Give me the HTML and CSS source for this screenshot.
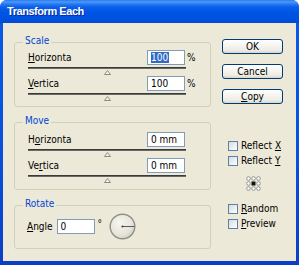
FILE: index.html
```html
<!DOCTYPE html>
<html>
<head>
<meta charset="utf-8">
<title>Transform Each</title>
<link rel="stylesheet" href="styles.css">
</head>
<body>
<div class="window">
  <div class="titlebar"><span class="title">Transform Each</span></div>
  <div class="client">
    <div class="left">
      <fieldset class="group scale">
        <legend>Scale</legend>
        <div class="gbody">
          <div class="srow">
            <div class="field"><span class="label"><u>H</u>orizonta</span><span class="input"><span class="hl">100</span></span><span class="unit">%</span></div>
            <div class="track"></div>
            <div class="thumb"><svg width="7" height="5" viewBox="0 0 7 5"><path d="M3.5 0.5 L6.5 4.5 L0.5 4.5 Z" fill="#f4f3ee" stroke="#8a8a80" stroke-width="1"/></svg></div>
          </div>
          <div class="srow">
            <div class="field"><span class="label"><u>V</u>ertica</span><span class="input">100</span><span class="unit">%</span></div>
            <div class="track"></div>
            <div class="thumb"><svg width="7" height="5" viewBox="0 0 7 5"><path d="M3.5 0.5 L6.5 4.5 L0.5 4.5 Z" fill="#f4f3ee" stroke="#8a8a80" stroke-width="1"/></svg></div>
          </div>
        </div>
      </fieldset>
      <fieldset class="group move">
        <legend>Move</legend>
        <div class="gbody">
          <div class="srow">
            <div class="field"><span class="label">H<u>o</u>rizonta</span><span class="input">0 mm</span><span class="unit"></span></div>
            <div class="track"></div>
            <div class="thumb"><svg width="7" height="5" viewBox="0 0 7 5"><path d="M3.5 0.5 L6.5 4.5 L0.5 4.5 Z" fill="#f4f3ee" stroke="#8a8a80" stroke-width="1"/></svg></div>
          </div>
          <div class="srow">
            <div class="field"><span class="label">Ve<u>r</u>tica</span><span class="input">0 mm</span><span class="unit"></span></div>
            <div class="track"></div>
            <div class="thumb"><svg width="7" height="5" viewBox="0 0 7 5"><path d="M3.5 0.5 L6.5 4.5 L0.5 4.5 Z" fill="#f4f3ee" stroke="#8a8a80" stroke-width="1"/></svg></div>
          </div>
        </div>
      </fieldset>
      <fieldset class="group rotate">
        <legend>Rotate</legend>
        <div class="gbody">
          <div class="arow">
            <span class="label"><u>A</u>ngle</span>
            <span class="input">0</span>
            <span class="deg">°</span>
            <svg class="dial" width="27" height="27" viewBox="0 0 27 27">
              <defs>
                <radialGradient id="dg" cx="0.4" cy="0.35" r="0.7">
                  <stop offset="0" stop-color="#f6f5ef"/>
                  <stop offset="0.7" stop-color="#e6e4da"/>
                  <stop offset="1" stop-color="#cfccc0"/>
                </radialGradient>
              </defs>
              <circle cx="13.5" cy="13.5" r="12.3" fill="url(#dg)" stroke="#8e8e8a" stroke-width="1.4"/>
              <line x1="13.5" y1="13.5" x2="25.5" y2="13.5" stroke="#5a5a5a" stroke-width="1"/>
              <circle cx="13.5" cy="13.5" r="1.1" fill="#444"/>
            </svg>
          </div>
        </div>
      </fieldset>
    </div>
    <div class="right">
      <div class="btn">OK</div>
      <div class="btn">Cancel</div>
      <div class="btn"><u>C</u>opy</div>
      <div class="checks first">
        <div class="chk"><span class="box"></span><span>Reflect <u>X</u></span></div>
        <div class="chk"><span class="box"></span><span>Reflect <u>Y</u></span></div>
      </div>
      <svg class="refpt" width="15" height="15" viewBox="0 0 15 15">
        <g fill="#fff" stroke="#8a8a8a" stroke-width="0.9">
          <circle cx="2.5" cy="2.5" r="1.8"/>
          <circle cx="7.5" cy="2.5" r="1.8"/>
          <circle cx="12.5" cy="2.5" r="1.8"/>
          <circle cx="2.5" cy="7.5" r="1.8"/>
          <circle cx="12.5" cy="7.5" r="1.8"/>
          <circle cx="2.5" cy="12.5" r="1.8"/>
          <circle cx="7.5" cy="12.5" r="1.8"/>
          <circle cx="12.5" cy="12.5" r="1.8"/>
        </g>
        <rect x="5.5" y="5.5" width="4" height="4" fill="#111"/>
      </svg>
      <div class="checks second">
        <div class="chk"><span class="box"></span><span><u>R</u>andom</span></div>
        <div class="chk"><span class="box"></span><span><u>P</u>review</span></div>
      </div>
    </div>
  </div>
</div>
</body>
</html>
```

FILE: styles.css
```css
* { box-sizing: border-box; }
html, body { margin: 0; padding: 0; background: #ffffff; }
body {
  width: 299px;
  height: 265px;
  overflow: hidden;
  font-family: "DejaVu Sans Condensed", "Liberation Sans", sans-serif;
  font-size: 10px;
  color: #000;
}
u { text-decoration: underline; text-underline-offset: 1px; }

.window {
  width: 299px;
  height: 265px;
  display: flex;
  flex-direction: column;
  background: linear-gradient(to bottom, #0a5ae6 0%, #0850dc 60%, #0a3fc6 100%);
  border-radius: 7px 7px 0 0;
  overflow: hidden;
}
.titlebar {
  height: 23px;
  flex: none;
  display: flex;
  align-items: center;
  padding-left: 7px;
  padding-bottom: 1px;
  background: linear-gradient(to bottom, #2a7af0 0px, #4d9af8 2px, #2a7af2 4px, #0a60ec 7px, #0055e5 12px, #0052e0 18px, #0049d4 23px);
}
.title {
  color: #fff;
  font-family: "Liberation Sans", sans-serif;
  font-weight: bold;
  font-size: 11px;
  letter-spacing: -0.45px;
  text-shadow: 1px 1px 0 #0b2c9a;
}
.client {
  flex: 1;
  margin: 0 3px 4px 3px;
  background: #ece9d8;
  display: flex;
}

.left {
  width: 208px;
  padding-left: 11px;
  padding-top: 12px;
  flex: none;
}
.group {
  width: 197px;
  margin: 0;
  padding: 0;
  border: 1px solid #d0d0bf;
  border-radius: 3px;
  min-width: 0;
}
.group + .group { margin-top: 8px; }
.group legend {
  margin-left: 8px;
  padding: 0 2px 2px 2px;
  line-height: 12px;
  color: #0046d5;
}
.gbody { padding-left: 13px; }
.scale .gbody { padding-top: 1px; padding-bottom: 4px; }
.move .gbody { padding-top: 3px; padding-bottom: 5px; }
.rotate .gbody { padding-top: 1px; padding-bottom: 9px; padding-left: 12px; }

.srow { height: 26px; }
.field {
  display: flex;
  align-items: center;
  height: 15px;
}
.field .label { flex: 1; }
.input {
  width: 38px;
  height: 15px;
  border: 1px solid #7f9db9;
  background: #fff;
  padding-left: 3px;
  line-height: 13px;
  white-space: nowrap;
}
.hl { background: #316ac5; color: #fff; padding: 0 1px 0 0; }
.unit { width: 23px; margin-left: 2px; }
.track {
  width: 158px;
  height: 2px;
  margin-top: 2px;
  background: #3a3a36;
  border-bottom: 1px solid #6b6b66;
}
.thumb {
  width: 158px;
  display: flex;
  justify-content: center;
  margin-top: 1px;
  height: 5px;
}
.thumb svg { display: block; }

.arow {
  display: flex;
  align-items: center;
  height: 26px;
}
.arow .input { margin-left: 4px; }
.deg { margin-left: 3px; align-self: flex-start; margin-top: 5px; width: 11px; }
.dial { display: block; }

.right {
  width: 61px;
  margin-left: 11px;
  padding-top: 16px;
  display: flex;
  flex-direction: column;
}
.btn {
  height: 15px;
  border: 1px solid #003c74;
  border-radius: 3px;
  background: linear-gradient(to bottom, #ffffff 0%, #f6f5f0 40%, #ecebe4 80%, #d8d4c8 100%);
  text-align: center;
  line-height: 13px;
}
.btn + .btn { margin-top: 10px; }
.checks.first { margin-top: 34px; }
.checks.second { margin-top: 10px; }
.chk {
  height: 15px;
  display: flex;
  align-items: center;
  padding-left: 6px;
  white-space: nowrap;
}
.box {
  width: 10px;
  height: 10px;
  border: 1px solid #5f7fa3;
  background: linear-gradient(135deg, #d8dce0 0%, #eef0f2 60%, #ffffff 100%);
  margin-right: 3px;
  flex: none;
}
.refpt { display: block; margin-top: 8px; margin-left: 24px; }
```
